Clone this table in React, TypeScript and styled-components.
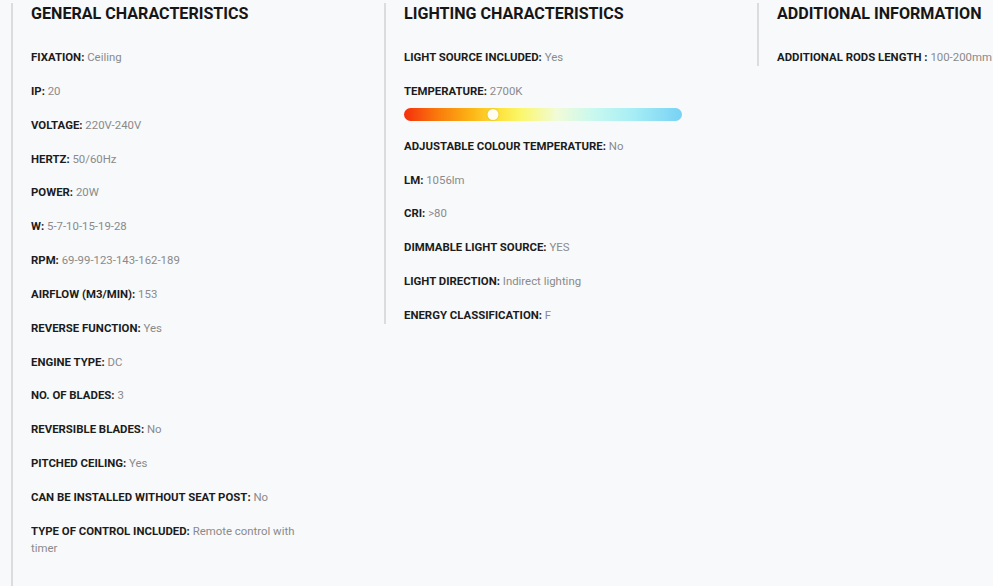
import React from "react";
import { createGlobalStyle, styled } from "styled-components";

const GlobalStyle = createGlobalStyle`
  body {
    margin: 0;
    background: #f8f9fb;
    font-family: Roboto, "Liberation Sans", sans-serif;
    overflow: hidden;
  }
`;

const Page = styled.div`
  display: flex;
  align-items: flex-start;
  padding: 3px 0 0 11px;
  overflow: hidden;
`;

const Column = styled.section<{ $extra?: number }>`
  width: 353px;
  flex-shrink: 0;
  border-left: 2px solid #dcdcdf;
  padding: 0 0 ${(p) => p.$extra ?? 0}px 18px;
  box-sizing: content-box;
  &:last-child {
    flex-shrink: 1;
    min-width: 0;
  }
`;

const Heading = styled.h2`
  margin: 1px 0 0;
  font-size: 16.1px;
  line-height: 20px;
  font-weight: 700;
  color: #161616;
  text-transform: uppercase;
  white-space: nowrap;
`;

const List = styled.ul<{ $width?: number; $nowrap?: boolean }>`
  list-style: none;
  margin: 25px 0 0;
  padding: 0;
  display: flex;
  flex-direction: column;
  gap: 16.85px;
  max-width: ${(p) => p.$width ?? 300}px;
  white-space: ${(p) => (p.$nowrap ? "nowrap" : "normal")};
`;

const Row = styled.li`
  font-size: 11.4px;
  line-height: 17px;
  color: #8a8a8a;
`;

const Label = styled.b`
  color: #1c1c1c;
  font-weight: 700;
`;

const Bar = styled.div`
  position: relative;
  margin-top: 8px;
  width: 278px;
  height: 13px;
  border-radius: 7px;
  background: linear-gradient(
    90deg,
    #f42f0c 0%,
    #f97a0c 12%,
    #fcb415 24%,
    #fde23a 34%,
    #fbf76b 42%,
    #f1fbd8 55%,
    #c9f8ef 68%,
    #a8eef5 82%,
    #77d2f4 100%
  );
`;

const Thumb = styled.span`
  position: absolute;
  top: 1px;
  width: 11px;
  height: 11px;
  border-radius: 50%;
  background: #fffdf0;
  box-shadow: 0 0 2px rgba(150, 120, 0, 0.45);
  transform: translateX(-50%);
`;

type Spec = [string, string];

const general: Spec[] = [
  ["FIXATION:", "Ceiling"],
  ["IP:", "20"],
  ["VOLTAGE:", "220V-240V"],
  ["HERTZ:", "50/60Hz"],
  ["POWER:", "20W"],
  ["W:", "5-7-10-15-19-28"],
  ["RPM:", "69-99-123-143-162-189"],
  ["AIRFLOW (M3/MIN):", "153"],
  ["REVERSE FUNCTION:", "Yes"],
  ["ENGINE TYPE:", "DC"],
  ["NO. OF BLADES:", "3"],
  ["REVERSIBLE BLADES:", "No"],
  ["PITCHED CEILING:", "Yes"],
  ["CAN BE INSTALLED WITHOUT SEAT POST:", "No"],
  ["TYPE OF CONTROL INCLUDED:", "Remote control with timer"],
];

const lighting: Spec[] = [
  ["ADJUSTABLE COLOUR TEMPERATURE:", "No"],
  ["LM:", "1056lm"],
  ["CRI:", ">80"],
  ["DIMMABLE LIGHT SOURCE:", "YES"],
  ["LIGHT DIRECTION:", "Indirect lighting"],
  ["ENERGY CLASSIFICATION:", "F"],
];

const SpecRow = ({ spec }: { spec: Spec }) => (
  <Row>
    <Label>{spec[0]}</Label> {spec[1]}
  </Row>
);

const App = () => {
  // 2700K on the colour temperature scale
  const thumbPos = 89;

  return (
    <>
      <GlobalStyle />
      <Page>
        <Column $extra={40}>
          <Heading>General characteristics</Heading>
          <List $width={280}>
            {general.map((s) => (
              <SpecRow key={s[0]} spec={s} />
            ))}
          </List>
        </Column>
        <Column>
          <Heading>Lighting characteristics</Heading>
          <List>
            <SpecRow spec={["LIGHT SOURCE INCLUDED:", "Yes"]} />
            <Row>
              <Label>TEMPERATURE:</Label> 2700K
              <Bar>
                <Thumb style={{ left: thumbPos }} />
              </Bar>
            </Row>
            {lighting.map((s) => (
              <SpecRow key={s[0]} spec={s} />
            ))}
          </List>
        </Column>
        <Column>
          <Heading>Additional information</Heading>
          <List $width={240} $nowrap>
            <SpecRow spec={["ADDITIONAL RODS LENGTH :", "100-200mm"]} />
          </List>
        </Column>
      </Page>
    </>
  );
};

export default App;
